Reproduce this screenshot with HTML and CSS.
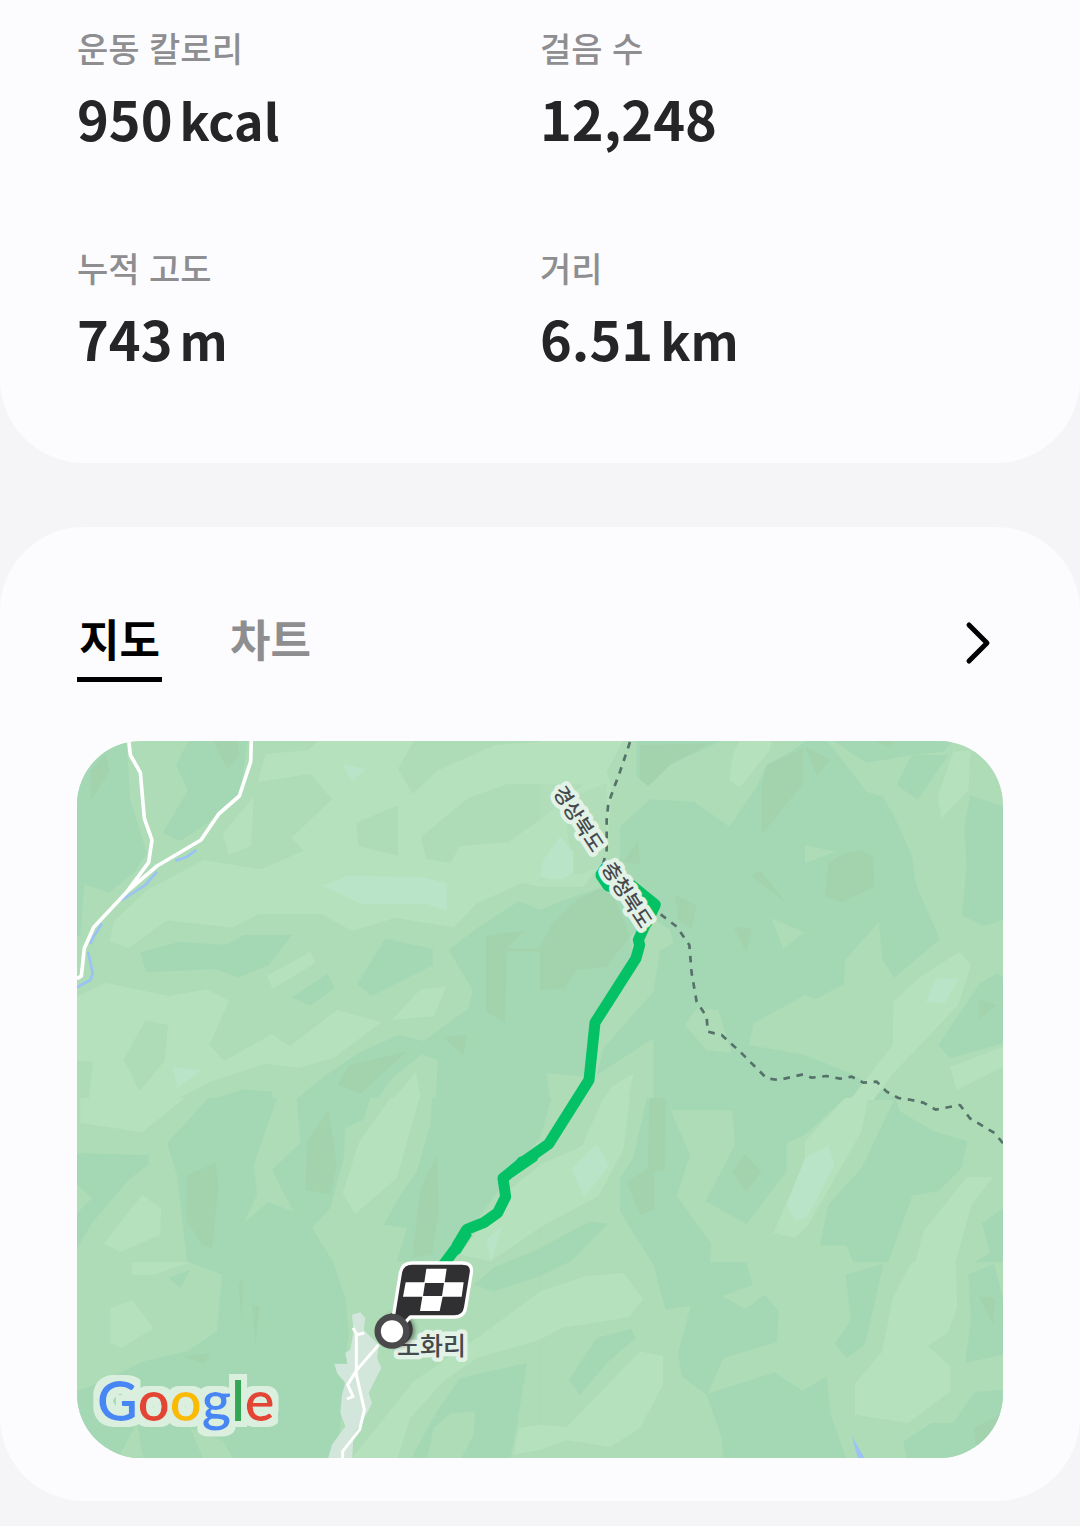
FILE: index.html
```html
<!DOCTYPE html>
<html lang="ko">
<head>
<meta charset="utf-8">
<meta name="viewport" content="width=device-width, initial-scale=1">
<title>운동 기록</title>
<link rel="stylesheet" href="styles.css">
</head>
<body>
<main class="page">
  <section class="card card-stats">
    <dl class="stats">
      <div class="stat"><dt>운동 칼로리</dt><dd>950<span class="unit">kcal</span></dd></div>
      <div class="stat"><dt>걸음 수</dt><dd>12,248</dd></div>
      <div class="stat"><dt>누적 고도</dt><dd>743<span class="unit">m</span></dd></div>
      <div class="stat"><dt>거리</dt><dd>6.51<span class="unit">km</span></dd></div>
    </dl>
  </section>

  <section class="card card-map">
    <header class="bar">
      <div class="tabs" role="tablist">
        <button class="tab tab-active" type="button" role="tab" aria-selected="true">지도</button>
        <button class="tab" type="button" role="tab" aria-selected="false">차트</button>
      </div>
      <button class="more" type="button" aria-label="자세히 보기">
        <svg viewBox="0 0 48 48" aria-hidden="true"><path d="M14 6 32 24 14 42"/></svg>
      </button>
    </header>

    <svg class="map" viewBox="0 3 2778 2151" role="img" aria-label="이동 경로 지도">
      <defs>
        <filter id="halo" x="-10%" y="-20%" width="120%" height="140%">
          <feMorphology in="SourceAlpha" operator="dilate" radius="17" result="fat"/>
          <feGaussianBlur in="fat" stdDeviation="2" result="soft"/>
          <feFlood flood-color="#dbefdf"/>
          <feComposite in2="soft" operator="in"/>
          <feMerge><feMergeNode/><feMergeNode in="SourceGraphic"/></feMerge>
        </filter>
        <filter id="shade" x="-30%" y="-30%" width="160%" height="160%">
          <feDropShadow dx="5" dy="3" stdDeviation="6" flood-color="#333" flood-opacity=".6"/>
        </filter>
      </defs>
      <rect class="mid" width="2778" height="2160"/>

      <!-- terrain, north-west -->
      <g>
        <g class="dark">
          <path d="M0 110 40 60 80 0 148 0 160 180 210 340 170 400 95 458 22 432 10 590 0 590Z"/>
          <path d="M335 0H512L490 165 425 225 370 265 310 303 257 280 333 150 297 75Z"/>
          <path d="M190 637 305 606 450 614 500 585H645L575 675 485 713 415 687 208 697Z"/>
          <path d="M925 596 1067 627V675L885 767 840 733ZM645 772 752 700 773 743 700 797Z"/>
          <path d="M1390 510 1325 484 1200 565 1115 630 1187 750 1175 805 1040 903 965 885 850 935 740 1010 655 1080H900L945 1015 1035 942 1083 962 1075 1080H1390ZM400 1080 500 1048 585 1055 588 1080Z"/>
        </g>
        <g class="light">
          <path d="M565 42 695 30 725 0H1012L963 87 1008 162 1080 92 1255 15 1390 5V133H1290L1175 173 1033 290 1047 357 1120 368 1150 318 1293 307 1390 238V440L1335 429 1200 490 1130 562 955 534 825 573 735 523H545L465 563 270 541 155 624 98 605 110 545 210 450 380 360 550 388 680 332 643 293 765 178 700 102 543 126Z"/>
          <path d="M530 170 523 318 455 345 438 280ZM570 707 700 635 716 668 587 747Z"/>
          <path d="M0 770 85 728 275 768 390 748 456 782 397 915 442 962 585 882 638 919 780 810 914 846 770 955 665 983 565 972 400 1025 295 1080H0Z"/>
          <path d="M945 840 1030 748 1108 740 1070 829ZM945 1080 1017 995 1032 1080Z"/>
        </g>
        <path class="mid" d="M838 248 963 196V347L845 318ZM205 842 273 855 263 962 188 1053 140 958ZM0 962 48 966 35 1080H0Z"/>
        <path class="mint" d="M737 436 810 409 1030 410 1109 429V514L1050 492 850 491ZM795 72 868 88 824 123ZM287 982 372 990 302 1045Z"/>
        <path class="olive" d="M1227 588 1345 570 1290 625H1390V635H1290L1284 847 1227 815ZM1098 893 1170 883 1160 946ZM815 975 990 934 850 1062 782 1035ZM408 0H480L487 45 450 88ZM42 90 85 40 98 95 42 180Z"/>
      </g>

      <!-- terrain, north-east -->
      <g transform="translate(1389 0)">
        <path class="light" d="M0 0H250L200 95 215 140 200 350 130 440 0 440Z"/>
        <path class="mid" d="M0 133H130L60 190 0 240ZM70 180 200 130 200 370 130 400 0 420 0 412 60 420 100 400Z" opacity=".5"/>
        <g class="dark">
          <path d="M240 260 330 178 462 185 568 260 650 140 680 75 760 30 800 0H860L980 155 1030 170 1060 225 1115 345 1130 440 1200 597 1063 713 1027 660 1017 545 915 660 912 733 826 778 795 765 640 850 628 915 795 945 930 1000 1080 1080H0V510L100 470 180 445 240 400Z"/>
          <path d="M290 0H550L390 75 325 138 290 110ZM880 0H1240L1210 35 1115 45 980 68 920 30ZM1115 45H1225L1133 180 1070 135Z"/>
          <path d="M1290 165 1389 200V540L1330 558 1265 525 1280 380 1273 265ZM1195 915 1320 730 1370 700 1389 710V910L1230 955Z"/>
        </g>
        <path class="mid" d="M270 590 330 530 390 570 400 608 360 632 340 755 190 925 170 1005 240 960 340 895V1080H30L20 1000 140 1010 160 850 280 650ZM795 315 888 335 795 370ZM695 535 792 577 730 627ZM435 855 470 805 535 810 550 860 575 940 500 930Z"/>
        <path class="light" d="M600 0H695L690 30 600 142 567 120 580 40ZM1240 35 1292 30 1285 150 1205 235 1193 170ZM1258 635 1293 675 1255 795 1060 1000 1000 1080H930L1058 915 1060 785 1135 715ZM1230 980 1389 920V980L1250 1050ZM190 1080 215 1040 280 1000 265 1080Z"/>
        <path class="mint" d="M1187 715 1255 717 1215 790 1158 785ZM10 360 60 290 100 335V400L60 420 0 412Z"/>
        <path class="olive" d="M0 622 30 560 110 480 180 445 225 475 270 590 200 680 110 690 75 745 0 750ZM300 15 510 10 395 70 325 138 300 120ZM680 75 790 25V130L665 285V140ZM795 20 872 60 830 108ZM910 340 960 330 1000 350 1003 440 905 487 855 470 865 370ZM635 408 660 390 740 490ZM405 465 470 495 455 565 415 540ZM580 560 635 565 620 640ZM1318 780 1370 795 1318 840ZM295 300 300 375 250 365ZM990 0H1060L1055 25Z"/>
      </g>

      <!-- terrain, south-west -->
      <g transform="translate(0 1074)">
        <path class="dark" d="M0 0H1390V1086H0Z"/>
        <path class="mid" d="M0 0H395L270 135 300 230 330 490 435 530 420 700 330 760 200 790 80 850 0 880ZM600 0H660L670 135 585 215 650 342 575 312 500 375 540 290 530 200ZM880 0H1065L1060 80 1020 220 965 300 920 380 990 390 960 490 1100 490 1220 340 1320 200 1390 120V1086H780L815 700 805 600 770 495 705 390 760 330 800 180 805 90 860 65ZM120 1086 180 975 200 1086ZM340 990 440 1030 470 1086H380Z"/>
        <path class="dark" d="M0 165 215 172V200L155 245 45 375 0 450V345L45 300 0 260ZM275 540 340 515 310 570ZM1190 560 1250 510 1390 450V535L1250 580ZM1000 1086 1080 940 1150 840 1350 795 1320 980 1300 1086Z"/>
        <path class="light" d="M10 0H325L195 103 10 75ZM195 290 252 330 250 410 130 462 80 437ZM165 493H340L230 530H165ZM100 630 165 607 230 690 135 750 100 735ZM940 0H1027L960 240 835 347 797 285 845 135ZM1390 200 1280 290 1150 470 1240 490 1300 450 1390 388ZM820 1086 890 1000 1010 850 1200 720 1390 580V725L1200 780 1100 850 1000 960 960 1086ZM1325 990 1390 980V1055L1310 1070Z"/>
        <path class="mid" d="M1070 990 1120 945 1195 940 1190 1010 1150 1086H1050Z"/>
        <path class="mint" d="M1275 385 1243 490 1228 425Z"/>
        <path class="olive" d="M330 230 415 195 425 260 405 450 375 440 330 370ZM755 35 780 200 760 290 685 275 690 130ZM1030 270 1080 170 1085 340 1065 470 1005 480ZM485 560 498 540 495 690ZM525 620 548 625 535 740ZM320 775 400 765 380 797Z"/>
      </g>

      <!-- terrain, south-east -->
      <g transform="translate(1389 1074)">
        <g class="dark">
          <path d="M320 0H915L795 110 740 135V220L620 378 497 310 585 140 577 37H392L450 170 410 295 513 435 510 493H620L637 560 547 595 617 633 673 590 717 640 710 733 550 780 503 887 705 823 788 878 860 835 872 950 920 1086H550L545 1020 500 890 425 835 415 765 452 623 377 635 340 500 240 340V240L280 180Z"/>
          <path d="M1065 0 1080 40 1180 100 1282 130 1265 210 1195 280 1117 292 1045 493H940L920 443 840 442 865 320 965 210Z"/>
          <path d="M0 450 150 370 203 378 95 488 0 535ZM87 845 170 720 273 692 287 720 200 795 120 892ZM917 530 1030 497 975 740 920 780 885 737 933 665Z"/>
          <path d="M1389 330 1327 375 1350 465 1305 493H1389ZM1285 530 1362 497 1389 600V770L1275 795 1293 665ZM1389 875 1305 882 1240 975H1175L1090 1030 1100 1086H1389ZM0 0H35L0 120Z"/>
        </g>
        <g class="light">
          <path d="M0 200 125 145 190 0H270L250 155 175 295 0 388ZM0 580 135 535 250 525 310 603 265 658 65 690 0 725ZM0 980 80 987 300 760 370 775V860L300 990 212 1047 80 1027 0 1055Z"/>
          <path d="M985 0 965 100 805 380 765 420 700 405 795 185V130L915 0Z"/>
          <path d="M1280 237H1360L1295 320 1247 490 1252 630 1222 705 1163 745 1232 805V880L1105 975 945 950V857L1027 760 1058 600 1115 493 1127 490 1150 400Z"/>
        </g>
        <path class="mint" d="M170 138 207 203 132 297 95 213ZM865 142 884 200 800 360 767 370 740 320 795 180Z"/>
        <path class="olive" d="M328 0H378L375 215 343 220V335L300 350 260 255 323 210ZM615 167 665 222 617 282 577 222ZM1315 595 1365 600 1360 680ZM1300 990 1389 945V1020L1310 1045Z"/>
        <path class="lake" d="M935 1013 977 1086H955Z"/>
      </g>

      <!-- streams, village and roads -->
      <path class="stream" d="M0 742 40 720 47 700 33 635M40 612 50 590 75 550M135 480 205 435 240 395M295 362 330 350 358 330"/>
      <path class="village" d="M825 1724 850 1717 865 1734 860 1769 905 1814 900 1854 913 1884 890 1929 875 1959 885 1989 870 2019 830 2084 825 2160H752L765 2114 805 2059 790 2019 795 1964 805 1929 780 1899 772 1871 812 1872 805 1839 820 1829 830 1774Z"/>
      <path class="road" d="M155 0 160 45 190 98 202 235 225 300 215 367 150 455M523 0 521 65 487 168 425 222 372 300 240 378 150 455 50 562 22 625 13 708 0 716"/>
      <path class="road road-small" d="M828 1764 840 1784 862 1779M838 1784V1904L862 2009 848 2069 797 2134V2160M905 1814 840 1889 812 1934 828 1969 810 1977"/>

      <!-- province border -->
      <path class="border" d="M1659 6 1629 95 1594 190 1589 240V330L1579 370M1751 523 1799 560 1837 615 1844 700 1859 785 1889 830 1892 875 1934 885 1989 935 2069 1015 2104 1020 2179 1003 2204 1013 2249 1008 2289 1016 2324 1010 2359 1028 2399 1025 2429 1055 2464 1074 2504 1080 2539 1088 2576 1109 2649 1095 2679 1135 2754 1180 2778 1210"/>

      <!-- recorded route -->
      <path class="route-fill" d="M1556 398 1575 370 1640 395 1670 420 1744 480Q1756 490 1749 503L1722 560 1690 540 1640 470 1605 453Q1588 460 1578 445L1556 412Z"/>
      <path class="route" d="M1725 510 1684 600 1688 615 1677 655 1554 848 1536 1020 1415 1212 1335 1268 1278 1315 1286 1370 1262 1418 1220 1448 1170 1468 1140 1520 1095 1580"/>
      <path class="route-fill" d="M1290 1295 1325 1252 1365 1240 1400 1220 1380 1262 1310 1310ZM1155 1460 1185 1485 1150 1540 1120 1560 1125 1510Z"/>

      <text class="place" transform="translate(1426 156) rotate(57)">경상북도</text>
      <text class="place" transform="translate(1572 384) rotate(57)">충청북도</text>
      <text class="place place-town" x="960" y="1844">노화리</text>

      <!-- finish flag and end point -->
      <g transform="translate(0 1074)">
        <circle class="pin-back" cx="957" cy="694" r="50" filter="url(#shade)"/>
        <path class="flag" d="M1005 495H1155Q1188 495 1183 525L1166 628Q1162 657 1132 657H1000L955 705 945 680 970 525Q975 495 1005 495Z"/>
        <path class="cells" d="M1048 512H1109L1103 553H1160L1154 596H1097L1088 639H1029L1036 596H978L986 553H1042ZM1044 555 1038 594H1095L1101 555Z" fill-rule="evenodd"/>
        <circle class="pin" cx="945" cy="700" r="43"/>
      </g>

      <text class="logo" x="60" y="2042" filter="url(#halo)"><tspan class="g-blue">G</tspan><tspan class="g-red">o</tspan><tspan class="g-yellow">o</tspan><tspan class="g-blue">g</tspan><tspan class="g-green">l</tspan><tspan class="g-red">e</tspan></text>
    </svg>
  </section>
</main>
</body>
</html>
```
FILE: styles.css
```css
* {
  box-sizing: border-box;
}

body {
  margin: 0;
  background: #f5f5f7;
  color: #252528;
  font-family: "Noto Sans CJK KR", "Noto Sans", sans-serif;
}

.page {
  display: flex;
  flex-direction: column;
  gap: 64px;
  padding-bottom: 25px;
}

.card {
  padding: 0 77px;
  background: #fcfcff;
}

.card-stats {
  padding-top: 24px;
  padding-bottom: 89px;
  border-radius: 0 0 84px 84px;
}

.stats {
  display: grid;
  grid-template-columns: 1fr 1fr;
  row-gap: 90px;
  margin: 0;
}

.stat {
  display: flex;
  flex-direction: column;
  gap: 10px;
}

.stat dt {
  color: #8e8e91;
  font-size: 34px;
  font-weight: 500;
  line-height: 48px;
}

.stat dd {
  display: flex;
  align-items: baseline;
  gap: 7px;
  margin: 0;
  font-size: 54px;
  font-weight: 700;
  line-height: 72px;
}

.unit {
  font-size: 50px;
  line-height: 1;
}

.card-map {
  padding-top: 85px;
  padding-bottom: 43px;
  border-radius: 84px;
}

.bar {
  display: flex;
  justify-content: space-between;
  align-items: flex-start;
  margin-bottom: 59px;
}

.tabs {
  display: flex;
  gap: 66px;
}

.tab {
  padding: 0 2px 13px;
  border: 0;
  border-bottom: 5px solid transparent;
  background: none;
  color: #8e8e90;
  font: inherit;
  font-size: 44px;
  font-weight: 700;
  line-height: 52px;
}

.tab-active {
  border-color: #000;
  color: #000;
}

.more {
  width: 48px;
  height: 62px;
  padding: 7px 0;
  border: 0;
  background: none;
}

.more svg {
  display: block;
  width: 48px;
  height: 48px;
  fill: none;
  stroke: #000;
  stroke-width: 5;
  stroke-linecap: round;
  stroke-linejoin: round;
}

.map {
  display: block;
  width: 100%;
  height: auto;
  border-radius: 64px;
}

.mid { fill: #addcb6; }
.dark { fill: #a4d8b5; }
.light { fill: #b5e1bd; }
.mint { fill: #bae4c7; }
.olive { fill: #a3d3ad; }
.lake { fill: #9ac2f5; }
.village { fill: #d3e6dc; }

.stream,
.road,
.border,
.route {
  fill: none;
  stroke-linejoin: round;
}

.stream {
  stroke: #9ac2f5;
  stroke-width: 8;
}

.road {
  stroke: #fff;
  stroke-width: 11;
}

.road-small {
  stroke-width: 9;
}

.border {
  stroke: #56706a;
  stroke-width: 8;
  stroke-dasharray: 20 20;
}

.route {
  stroke: #04c166;
  stroke-width: 33;
}

.route-fill {
  fill: #04c166;
}

.place {
  fill: #45494d;
  stroke: #e3f2e7;
  stroke-width: 26;
  stroke-linejoin: round;
  paint-order: stroke;
  font-size: 60px;
  font-weight: 500;
}

.place-town {
  font-size: 75px;
}

.pin-back {
  fill: #38383a;
}

.flag {
  fill: #303032;
  stroke: #fff;
  stroke-width: 10;
  stroke-linejoin: round;
}

.cells {
  fill: #fff;
}

.pin {
  fill: #fff;
  stroke: #4a4a4c;
  stroke-width: 19;
}

.logo {
  font-family: Lato, sans-serif;
  font-size: 168px;
  font-weight: 600;
}

.g-blue { fill: #4687f4; }
.g-red { fill: #e34436; }
.g-yellow { fill: #f9bb06; }
.g-green { fill: #35a654; }
```
